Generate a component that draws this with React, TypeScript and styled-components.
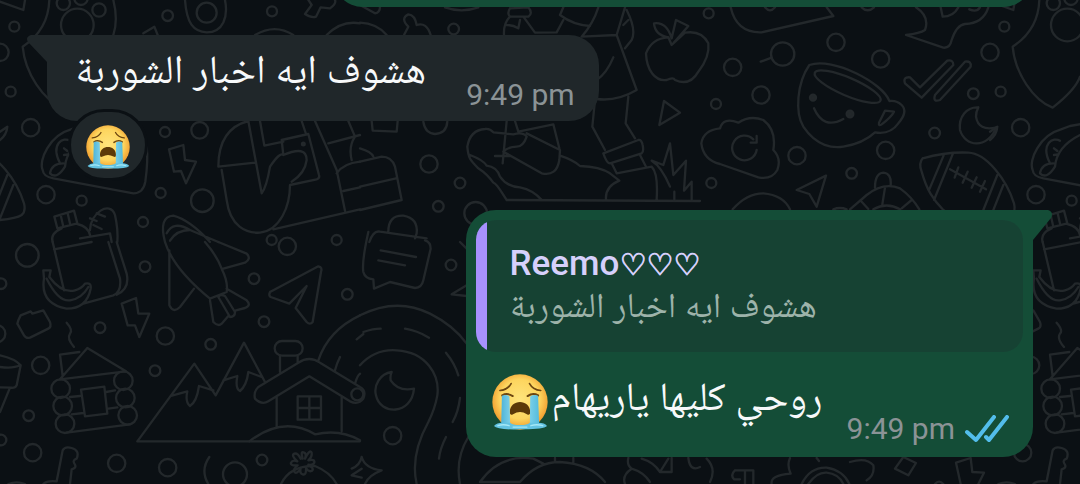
import React from "react";
import styled, { createGlobalStyle } from "styled-components";

const arabic = `Roboto, "Noto Naskh Arabic UI", "Noto Naskh Arabic", "Noto Sans Arabic", "DejaVu Sans", sans-serif`;

const GlobalStyle = createGlobalStyle`
  * { box-sizing: border-box; }
  html, body, #root { min-height: 100%; }
  body {
    margin: 0;
    background: #0b1014;
    font-family: ${arabic};
  }
  p { margin: 0; }
`;

const Chat = styled.main`
  position: relative;
  isolation: isolate;
  overflow: hidden;
  min-height: 100vh;
  display: flex;
  flex-direction: column;
  padding: 0 47px 27px;
`;

const Wallpaper = styled.svg`
  position: absolute;
  inset: 0;
  width: 100%;
  height: 100%;
  z-index: -1;
  fill: none;
  stroke: #23282b;
  stroke-width: 7;
  stroke-linecap: round;
  stroke-linejoin: round;
`;

const Bubble = styled.article<{ $sent?: boolean }>`
  position: relative;
  align-self: ${(p) => (p.$sent ? "flex-end" : "flex-start")};
  background: ${(p) => (p.$sent ? "#144d37" : "#20272a")};
  border-radius: ${(p) => (p.$sent ? "30px 0 30px 30px" : "0 30px 30px 30px")};
`;

const EarlierBubble = styled(Bubble)`
  width: 71%;
  height: 60px;
  margin-top: -53px;
`;

const ReceivedBubble = styled(Bubble)`
  margin-top: 28px;
  min-height: 86px;
  padding: 0 24px 0 28px;
  display: flex;
  gap: 40px;
`;

const SentBubble = styled(Bubble)`
  margin: 29px 0 0;
  padding: 10px;
`;

const Tail = styled.svg<{ $sent?: boolean }>`
  position: absolute;
  top: 0;
  ${(p) => (p.$sent ? "left: 100%;" : "right: 100%;")}
  width: 20px;
  height: 32px;
  fill: ${(p) => (p.$sent ? "#144d37" : "#20272a")};
`;

const Message = styled.p`
  align-self: flex-start;
  display: flex;
  align-items: center;
  gap: 4px;
  color: #f7f9fa;
  font-size: 40px;
  line-height: 80px;
  white-space: nowrap;
`;

const Meta = styled.footer`
  display: flex;
  align-items: center;
  gap: 10px;
  align-self: flex-end;
  color: #8b9396;
  font-size: 30px;
  line-height: 36px;
  padding-bottom: 8px;
  white-space: nowrap;
`;

const Reaction = styled.button`
  align-self: flex-start;
  display: grid;
  place-items: center;
  width: 80px;
  height: 72px;
  margin: -12px 0 0 21px;
  padding: 3px 0 0;
  border: 3px solid #0b1014;
  border-radius: 36px;
  background: #20272a;
  position: relative;
`;

const Quote = styled.blockquote`
  margin: 0;
  min-height: 132px;
  padding: 24px 34px 0;
  border-radius: 20px;
  background: linear-gradient(to right, #a791ff 11px, #164233 11px);
`;

const QuoteName = styled.p`
  color: #d6d0fb;
  font-size: 35px;
  font-weight: 500;
  line-height: 40px;
`;

const Hearts = styled.span`
  font-size: 30px;
  -webkit-text-stroke: 1px currentColor;
`;

const QuoteText = styled.p`
  color: #9db3aa;
  font-size: 35px;
  line-height: 52px;
  white-space: nowrap;
  text-align: left;
`;

const SentBody = styled.div`
  display: flex;
  gap: 24px;
  min-height: 95px;
  padding: 10px 14px 0 16px;
`;

const SentMeta = styled(Meta)`
  padding-bottom: 0;
`;

const EmojiArt = styled.svg<{ $size: number }>`
  width: ${(p) => p.$size}px;
  height: ${(p) => p.$size}px;
  flex: none;
`;

const Ticks = styled.svg`
  width: 44px;
  height: 28px;
  fill: none;
  stroke: #53bdeb;
  stroke-width: 4;
  stroke-linecap: round;
  stroke-linejoin: round;
`;

function CryingFace({ size, id }: { size: number; id: string }) {
  return (
    <EmojiArt $size={size} viewBox="44 42 170 170" role="img" aria-label="😭">
      <defs>
        <radialGradient id={`${id}-face`} cx="0.5" cy="0.45" r="0.55">
          <stop offset="0" stopColor="#ffe47c" />
          <stop offset="0.65" stopColor="#fdd55e" />
          <stop offset="1" stopColor="#f0982a" />
        </radialGradient>
        <linearGradient id={`${id}-tear`} x1="0" x2="1">
          <stop offset="0" stopColor="#4fb4d8" />
          <stop offset="0.45" stopColor="#a5e8f7" />
          <stop offset="1" stopColor="#55bbdc" />
        </linearGradient>
      </defs>
      <circle cx="129" cy="127" r="84" fill={`url(#${id}-face)`} />
      <g fill="none" stroke="#6d4611" strokeWidth="5" strokeLinecap="round">
        <path d="M68 92Q92 90 102 71M158 71Q168 90 192 92" />
        <path d="M75 107Q90 98 107 109M152 109Q168 98 184 107" strokeWidth="6" />
      </g>
      <path d="M98 158C98 117 160 117 160 158Q160 169 150 164Q129 151 108 164Q98 169 98 158Z" fill="#5c3908" />
      <path d="M74 108Q86 103 97 110L99 194H72ZM160 110Q172 103 184 108L187 194H159Z" fill={`url(#${id}-tear)`} />
      <path d="M50 200Q60 189 78 190H99Q106 197 129 197Q152 197 159 190H184Q204 190 211 200Q200 211 129 210Q60 212 50 200Z" fill="#63c3e2" />
      <path d="M62 199Q78 193 96 199M162 199Q180 193 198 199M108 203H150" fill="none" stroke="#a5e8f7" strokeWidth="4" strokeLinecap="round" />
    </EmojiArt>
  );
}

type Dot = [number, number, number];

const Rings = ({ at }: { at: Dot[] }) => (
  <>
    {at.map(([x, y, r]) => (
      <circle key={`${x},${y}`} cx={x} cy={y} r={r} />
    ))}
  </>
);

/* The doodle tile repeats every 990px; it is drawn at three times its size. */
function Doodles() {
  return (
    <Wallpaper aria-hidden="true">
      <defs>
        <g id="doodles">
          <g>
            <Rings at={[[43,80,15],[503,47,16],[816,34,15],[32,275,15],[92,383,26],[599,391,25],[495,396,15],[138,584,26],[245,602,15],[482,579,15],[429,666,15],[607,602,34],[0,157,26],[815,720,15],[1010,720,15],[190,10,20],[297,30,20],[232,75,49],[243,-5,20],[620,38,30]]} />
            <path d="M148 0Q145 90 68 140C75 220 130 300 188 323C230 290 260 260 270 230M340 0Q355 60 340 105M0 5L70 30L75 0M430 100L463 80L473 105M555 0C560 70 580 95 620 97C670 97 685 50 675 0" />
            <path d="M922 -5L935 15L915 42Q935 55 948 50L962 22L990 25Q1010 10 1005 0M765 105Q825 70 880 105M980 105Q1025 60 1080 70M0 395L22 380Q20 405 0 420" />
            <path d="M213 388C150 405 115 480 128 510Q130 530 160 535L400 580Q430 580 436 545Q445 480 440 440M270 405Q200 440 195 500Q170 540 150 520Q155 490 190 490M180 490C150 430 190 410 210 422M192 445l10 8M192 465l12 -2M213 388L240 378L285 370" />
            <path d="M507 448L550 435L555 480L588 485L558 550L543 513L522 515Z" />
            <path d="M745 363C680 380 655 430 655 500L765 488M665 510L680 600C690 680 740 700 780 698C840 690 870 620 870 555L950 538Q960 535 957 525L925 402L845 420L850 465M745 363L785 580Q800 560 810 500Q840 455 850 465Q920 435 920 480Q915 520 875 545M780 363L793 437L850 425M905 363L918 402M820 688L1080 628M945 363L1010 510L1035 632M985 430L1080 405M1010 520Q1030 490 1080 485M1030 573L1080 562M1045 363L1065 410Q1045 440 1055 480" />
            <circle cx="910" cy="432" r="4" fill="#23282b" />
            <path d="M163 650L222 632L232 670L172 685ZM182 645l8 35M203 640l8 35M185 685Q150 700 158 726M232 672Q265 680 270 705M270 690C270 640 330 600 345 645Q355 690 352 726M270 655l20 8M290 640l25 10M280 675l25 12M240 715L330 700L335 726" />
            <path d="M495 726Q475 650 520 647Q570 660 630 726M500 700Q520 660 570 690Q530 690 510 722M570 690L655 726" />
          </g>
          <g transform="translate(-810 0)">
            <path d="M608 475Q680 455 745 458C800 460 860 540 882 610Q888 635 875 645Q860 655 810 660C760 670 720 665 670 630C640 600 620 570 605 515Q595 490 608 475M672 464L628 568M700 458L642 600M832 525L790 630M850 555L810 655M690 508L798 568M715 502L704 533M743 515L728 548M770 532L755 563M795 543L780 575" />
          </g>
          <g transform="translate(1080 0)">
            <Rings at={[[281,87,16],[207,492,26],[300,549,16],[235,619,16],[1046,40,15],[1068,312,15],[1054,549,15],[347,640,34]]} />
            <path d="M0 68Q50 70 80 105M0 15L45 40Q60 38 60 20M255 22Q305 40 355 22M132 105L145 80Q120 55 145 43Q165 45 170 75Q200 65 212 105M35 363L38 392L110 395L113 363M190 365Q195 400 225 402Q260 400 262 365M0 485L65 470Q95 470 105 500L125 600L0 630M0 560L108 535M0 445Q35 455 40 470M85 695Q85 645 130 647Q175 655 170 700L165 715M28 726Q40 690 60 695L200 715" />
            <path d="M450 25L505 22Q520 40 505 50L450 50Q440 40 450 25M450 50Q430 70 432 105M440 75Q460 75 475 85L480 60M490 50L525 98L590 97L610 60M600 45Q640 75 690 78M610 22L600 45M715 22Q700 70 665 110L770 105L830 270Q770 305 710 297M795 22L770 105M800 30Q830 90 815 120L795 145M805 60L790 75M760 172Q740 220 710 240M705 300L697 380L735 450M805 290L797 370L825 415" />
            <path d="M730 460L835 420Q845 418 848 435Q852 455 845 460L750 490Q740 490 730 460M755 490L770 520L875 500Q895 520 890 598M840 465L858 500M440 600L1020 603M440 600C420 570 410 550 400 548C380 520 370 515 355 505C330 480 325 475 322 440Q330 390 375 387Q390 385 400 397L460 403Q490 395 500 410Q490 440 470 440Q445 440 430 455L545 520Q590 530 598 480L600 450L500 400M600 467Q640 480 660 498Q720 500 750 520L778 542Q735 560 738 598M330 465Q370 480 380 497Q410 500 420 530Q440 560 480 562Q520 570 545 600M440 363L428 490M405 468L450 468M465 363L475 395L580 373L598 445" />
            <path d="M875 482Q905 500 930 560M875 482L910 495L930 430L940 525L978 482L972 572L995 545V600M943 575V600" />
            <path d="M925 112Q875 115 858 160C860 210 885 245 920 240Q940 230 945 240Q990 260 1015 215Q1050 170 1045 130Q1025 90 975 98L935 135L925 112M935 115Q920 65 882 70Q885 105 925 112M935 115L948 60L985 78L940 130M912 303L960 338L898 375Z" />
          </g>
          <g transform="translate(2160 0)">
            <Rings at={[[348,127,26],[482,177,26],[188,162,35],[38,202,26],[123,285,26],[231,467,26],[395,520,16],[497,451,26],[644,399,16],[760,281,16]]} />
            <path d="M32 22Q50 100 125 97L340 48L320 22M135 22Q150 40 165 22M425 22Q443 40 462 22M122 185L155 173" />
            <path d="M268 195C230 250 225 340 250 380C290 440 340 445 370 440Q430 430 465 397Q510 405 535 370Q565 335 545 315Q530 300 508 303C490 250 340 170 268 195ZM495 332L522 335Q515 350 485 373Q475 380 477 368ZM282 325Q310 390 370 357" />
            <ellipse cx="383" cy="260" rx="107" ry="27" transform="rotate(23 383 260)" />
            <g fill="#23282b">
              <circle cx="279" cy="293" r="9" />
              <circle cx="390" cy="342" r="10" />
            </g>
            <path d="M555 250Q548 230 570 232L600 262L682 182Q700 178 700 195L605 293ZM645 285L735 185Q755 182 752 200L660 300Q638 308 645 285M775 322C740 320 715 350 720 390C735 440 800 450 830 382Q775 395 768 350Q768 335 775 322" />
            <path d="M0 385Q-50 390 -56 430Q-50 480 0 492L115 532Q155 540 172 510Q185 475 160 450Q170 390 130 360Q90 345 55 368Q10 350 0 385M110 450A37 37 0 1 1 100 418M110 408V428H92M318 527L230 570L268 582L290 620Z" />
            <path d="M38 628Q80 580 130 580Q190 585 210 628M465 563Q465 520 490 518Q515 520 512 555M390 628L440 585Q490 545 540 565Q575 590 598 628M425 605l20 22M495 563l-8 50M575 600L545 625M460 628Q500 605 540 628M340 628q20 -8 40 0M588 22Q630 50 615 90Q600 100 558 105L670 143Q690 145 695 120Q710 75 735 72Q790 70 805 22M662 22L668 50Q700 50 715 22M748 28Q770 38 780 22" />
          </g>
          <g transform="translate(0 726)">
            <Rings at={[[82,40,34],[435,74,16],[862,13,26],[762,110,16],[1042,157,16],[792,239,16],[300,257,16],[496,282,26],[632,307,16],[465,386,16],[122,370,26],[86,521,16],[98,632,26],[350,664,26],[503,677,26],[705,697,36],[786,654,16],[3,125,16],[-10,275,26],[3,594,16],[182,440,28],[188,492,28],[195,545,28],[370,416,28],[376,468,28],[383,520,28]]} />
            <path d="M158 0L192 145M162 22L275 0M325 0L360 110Q365 150 340 160L250 185M350 0L380 95Q390 140 350 158M130 85H152L148 105Q185 155 225 145Q245 140 255 125Q275 120 272 140Q260 200 200 200Q120 185 132 110ZM140 110Q175 180 210 175Q245 170 265 135" />
            <path d="M55 235L62 220L92 208L97 215L130 205L150 240Q155 255 145 260L90 287Q78 290 72 280L52 245ZM365 185L408 168L415 215L448 215L418 285L405 250L383 250ZM200 242Q220 265 210 275Q200 290 222 315" />
            <path d="M188 402L180 338L238 330M180 412L262 318L378 388L180 412M200 572L390 547M210 465L240 462M215 517L250 513M318 450L345 445M325 500L352 496M243 443L313 434L322 515L255 523ZM0 340Q45 350 62 370L50 430Q45 440 30 437L0 510M0 375Q40 380 60 370M0 436L35 437" />
            <path d="M495 0Q520 80 630 170L680 150Q685 120 665 80Q650 40 615 0M508 25V190Q520 215 540 195L582 140M655 0L740 35Q755 50 735 62L670 80M630 175L640 240Q655 255 665 245L685 222M655 165Q660 155 675 162L705 210Q705 225 690 225ZM680 140L740 175Q755 190 735 198L708 205" />
            <path d="M810 150L955 73Q968 75 963 90L938 240Q930 250 920 240L887 198L920 132L868 185L812 165Q805 160 810 150" />
            <path d="M412 598H1080M412 598L583 365L647 460L732 302L795 420M513 462L562 448Q555 480 570 492Q590 480 597 432L640 445M670 415L712 402Q705 440 720 447Q740 430 745 390L785 405" />
            <rect x="824" y="297" width="84" height="44" rx="22" />
            <path d="M840 341V390M893 341V360M775 435Q760 450 765 470Q785 490 805 478L928 403L1050 478Q1075 490 1090 470Q1100 445 1080 435L960 362Q928 340 895 362ZM830 465V555M1025 465V568M893 463H963V533H893ZM928 463V533M893 498H963M748 598Q850 520 945 577Q1020 560 1080 595" />
            <path d="M955 355Q985 265 1080 220M1070 292l20 -16M1005 385Q1010 365 1020 345M1065 425Q1072 400 1080 395M628 645Q600 685 625 726M843 726Q870 670 945 672Q990 690 1010 726M1085 680L1055 700L1085 707" />
            <path d="M908 650Q900 625 913 632Q920 635 915 650Q930 620 935 632Q937 645 925 655Q945 650 943 662Q940 670 925 668Q945 680 935 687Q925 690 918 678Q920 700 908 697Q898 695 902 678Q890 700 882 688Q880 680 893 670Q870 672 873 662Q878 652 892 658Q872 640 883 635Q893 632 902 650" />
            <path d="M170 718L188 625Q195 612 215 618Q240 625 230 650Q215 655 225 668Q230 678 215 682L210 726M130 726Q140 715 170 718M25 726q25 -10 50 0" />
          </g>
          <g transform="translate(1080 726)">
            <Rings at={[[273,69,16],[98,581,26],[-8,457,18]]} />
            <path d="M25 -30Q5 60 10 90Q15 110 40 112L42 140L90 120L165 138Q185 138 190 115L212 20Q212 0 195 -5M62 25L168 45M55 55L135 70M320 130L275 157L320 162M300 0L320 20" />
            <path d="M0 220Q110 165 210 215Q280 250 320 305M10 270Q40 260 62 260M135 260Q170 265 207 287M258 332Q285 365 295 400M300 468Q295 510 278 540M258 585Q240 620 237 650M0 370Q45 320 110 325C200 330 240 400 232 460Q225 500 205 540Q150 640 170 726M325 585Q285 650 300 726M95 390C60 395 40 430 48 460C60 520 155 520 162 440Q115 450 92 415Q90 400 95 390M5 645Q15 680 65 685Q25 700 15 726M5 645Q0 670 -25 680" />
            <path d="M360 720Q420 635 520 650L550 665M360 720H480Q530 660 600 660Q690 665 735 720M585 648V660M640 648V665M805 648Q800 670 815 680Q785 700 795 726M845 650Q880 660 900 690L925 650M815 680Q850 690 870 720M900 690H935V648M985 648Q990 690 1020 675M1040 650Q1070 680 1050 720" />
          </g>
          <g transform="translate(2160 726)">
            <path d="M45 685H100V726M45 685Q30 698 42 712H60M75 685V726M210 648Q200 670 212 695Q150 700 155 726M290 648L297 657M245 726Q270 675 320 677Q370 685 388 726M265 726Q290 690 320 692Q355 695 370 726M390 660Q440 645 460 670Q465 700 440 715M550 645L588 663L565 700L525 680ZM645 726q12 -14 25 0M722 726L708 662L752 648L757 690L792 692L775 726" />
          </g>
        </g>
      </defs>
      <g transform="scale(.33333)">
        <use href="#doodles" />
        <use href="#doodles" x="2970" />
        <use href="#doodles" x="5940" />
      </g>
    </Wallpaper>
  );
}

export default function App() {
  return (
    <>
      <GlobalStyle />
      <Chat>
        <Doodles />
        <EarlierBubble $sent />

        <ReceivedBubble>
          <Tail viewBox="0 0 20 32" aria-hidden="true">
            <path d="M20 0H4Q-2 2 1 7L20 27Z" />
          </Tail>
          <Message dir="rtl" lang="ar">هشوف ايه اخبار الشوربة</Message>
          <Meta><time>9:49 pm</time></Meta>
        </ReceivedBubble>
        <Reaction aria-label="Reaction">
          <CryingFace size={44} id="reaction" />
        </Reaction>

        <SentBubble $sent>
          <Tail $sent viewBox="0 0 20 32" aria-hidden="true">
            <path d="M0 0H15Q21 2 18 8L0 30Z" />
          </Tail>
          <Quote>
            <QuoteName>Reemo<Hearts>♡♡♡</Hearts></QuoteName>
            <QuoteText dir="rtl" lang="ar">هشوف ايه اخبار الشوربة</QuoteText>
          </Quote>
          <SentBody>
            <Message dir="rtl" lang="ar">
              <span>روحي كليها ياريهام</span>
              <CryingFace size={56} id="message" />
            </Message>
            <SentMeta>
              <time>9:49 pm</time>
              <Ticks viewBox="0 0 44 28" role="img" aria-label="Read">
                <path d="M2 17L11 25L29 2M21 22L24 25L42 2" />
              </Ticks>
            </SentMeta>
          </SentBody>
        </SentBubble>
      </Chat>
    </>
  );
}
